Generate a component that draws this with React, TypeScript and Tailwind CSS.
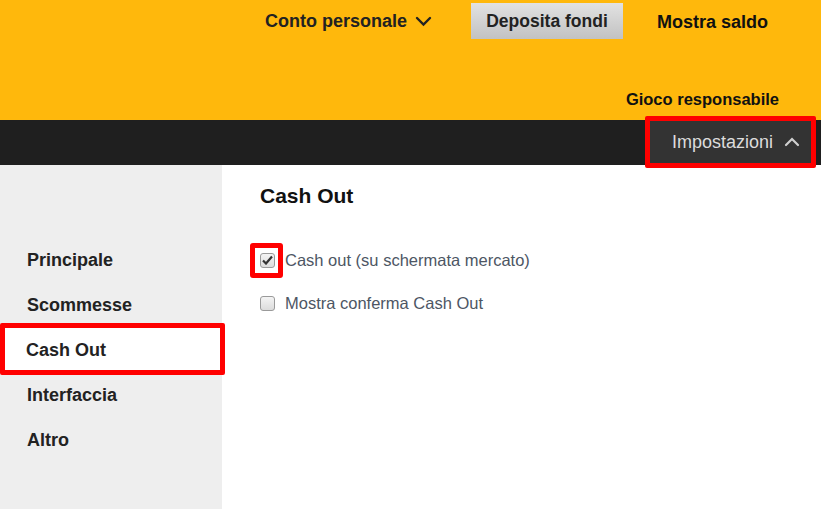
import React from "react";

const font = { fontFamily: '"Liberation Sans", Arial, sans-serif' };

function ChevronDown() {
  return (
    <svg width="17" height="11" viewBox="0 0 17 11" fill="none">
      <path d="M2 2l6.5 6.5L15 2" stroke="#222" strokeWidth="2.4" strokeLinecap="round" />
    </svg>
  );
}

function ChevronUp() {
  return (
    <svg width="16" height="10" viewBox="0 0 16 10" fill="none">
      <path d="M2 8l6-6 6 6" stroke="#cfcfcf" strokeWidth="2.2" strokeLinecap="round" />
    </svg>
  );
}

function Checkbox({ checked }: { checked?: boolean }) {
  return (
    <span className="flex h-[15px] w-[15px] items-center justify-center rounded-[3px] border border-[#9a9a9a] bg-gradient-to-b from-[#f4f4f4] to-[#dcdcdc]">
      {checked && (
        <svg width="11" height="10" viewBox="0 0 11 10">
          <path d="M1 5.5l3 3L10 1.5" stroke="#333" strokeWidth="2.2" fill="none" />
        </svg>
      )}
    </span>
  );
}

const menu = ["Principale", "Scommesse", "Cash Out", "Interfaccia", "Altro"];

export default function App() {
  return (
    <div className="h-[509px] w-[821px] overflow-hidden bg-white" style={font}>
      {/* Header */}
      <header className="flex h-[120px] flex-col bg-[#ffb80c]">
        <div className="flex items-start pt-[3px]">
          <div className="ml-[265px] flex h-[36px] w-[206px] items-center gap-[8px] text-[18px] font-bold text-[#222]">
            <span>Conto personale</span>
            <ChevronDown />
          </div>
          <button className="h-[36px] w-[152px] bg-gradient-to-b from-[#e2e2e2] to-[#c2c2c2] text-[17.5px] font-bold text-[#222]">
            Deposita fondi
          </button>
          <div className="ml-[34px] flex h-[38px] items-center text-[18px] font-bold text-[#111]">
            Mostra saldo
          </div>
        </div>
        <div className="mt-[46px] flex justify-end pr-[42px] text-[16.5px] font-bold text-[#111]">
          Gioco responsabile
        </div>
      </header>

      {/* Dark bar */}
      <div className="flex h-[45px] justify-end bg-[#1f1f1f] pr-[5px]">
        <div className="relative z-10 -mt-[4px] flex h-[52px] w-[171px] items-center rounded-[2px] border-[5px] border-[#ff0000] bg-[#333333] pl-[22px] text-[18px] text-[#dcdcdc]">
          <span>Impostazioni</span>
          <span className="ml-[11px]">
            <ChevronUp />
          </span>
        </div>
      </div>

      {/* Body */}
      <div className="flex h-[344px]">
        <nav className="w-[222px] shrink-0 bg-[#eeeeee] pt-[73px]">
          {menu.map((m) =>
            m === "Cash Out" ? (
              <div key={m} className="relative flex h-[45px] items-center pl-[26px] text-[18px] font-bold text-[#222]">
                <span className="absolute -bottom-[2px] -right-[3px] -top-[5px] left-0 rounded-[2px] border-[5px] border-[#ff0000] bg-white" />
                <span className="relative">{m}</span>
              </div>
            ) : (
              <div key={m} className="flex h-[45px] items-center pl-[27px] text-[18px] font-bold text-[#222]">
                {m}
              </div>
            )
          )}
        </nav>

        <main className="flex-1 pl-[38px] pt-[19px]">
          <h2 className="text-[21px] font-bold leading-[24px] text-[#111]">Cash Out</h2>
          <div className="mt-[43px] flex flex-col gap-[25px] text-[16.5px] text-[#4d5664]">
            <label className="flex h-[18px] items-center gap-[10px]">
              <span className="relative">
                <span className="absolute -left-[10px] -top-[10px] h-[35px] w-[33px] rounded-[3px] border-[5px] border-[#ff0000]" />
                <Checkbox checked />
              </span>
              <span>Cash out (su schermata mercato)</span>
            </label>
            <label className="flex h-[18px] items-center gap-[10px]">
              <Checkbox />
              <span>Mostra conferma Cash Out</span>
            </label>
          </div>
        </main>
      </div>
    </div>
  );
}
